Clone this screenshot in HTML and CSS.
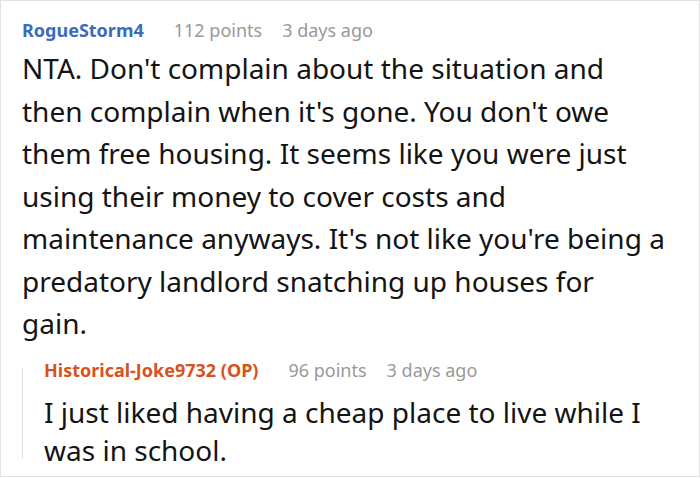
FILE: index.html
```html
<!DOCTYPE html>
<html>
<head>
<meta charset="utf-8">
<link rel="stylesheet" href="styles.css">
</head>
<body>
<div class="card">
  <div class="comment">
    <div class="meta">
      <span class="user">RogueStorm4</span>
      <span class="info">112 points</span>
      <span class="info">3 days ago</span>
    </div>
    <p class="text">NTA. Don't complain about the situation and<br>then complain when it's gone. You don't owe<br>them free housing. It seems like you were just<br>using their money to cover costs and<br>maintenance anyways. It's not like you're being a<br>predatory landlord snatching up houses for<br>gain.</p>
    <div class="reply">
      <div class="meta">
        <span class="user op">Historical-Joke9732 (OP)</span>
        <span class="info">96 points</span>
        <span class="info">3 days ago</span>
      </div>
      <p class="text small">I just liked having a cheap place to live while I<br>was in school.</p>
    </div>
  </div>
</div>
</body>
</html>
```
FILE: styles.css
```css
html, body {
  margin: 0;
  padding: 0;
  background: #fff;
}
body {
  font-family: "Noto Sans", "Open Sans", sans-serif;
  color: #111;
}
.card {
  width: 700px;
  height: 477px;
  box-sizing: border-box;
  border: 1px solid #e2e2e2;
  padding: 15px 0 0 21px;
}
.meta {
  display: flex;
  gap: 20px;
  font-size: 18px;
  line-height: 28px;
}
.user {
  font-weight: 700;
  color: #3a6bbd;
  margin-right: 10px;
}
.user.op {
  color: #d9511b;
}
.info {
  color: #999;
}
.text {
  margin: 3px 0 0 0;
  font-size: 28px;
  line-height: 42.5px;
  color: #141414;
  white-space: nowrap;
}
.reply {
  position: relative;
  margin-top: 11px;
  padding-left: 22px;
}
.reply::before {
  content: "";
  position: absolute;
  left: 0;
  top: 12px;
  bottom: 10px;
  border-left: 1px solid #dedede;
}
.text.small {
  margin-top: 9px;
  line-height: 38px;
}
```
